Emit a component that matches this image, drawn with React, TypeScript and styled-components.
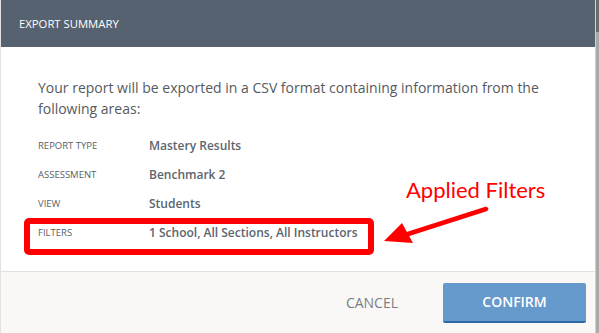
import styled, { createGlobalStyle } from 'styled-components';

const GlobalStyle = createGlobalStyle`
	html, body {
		margin: 0;
		padding: 0;
		background: #ffffff;
	}
	body {
		font-family: 'Open Sans', 'Liberation Sans', sans-serif;
	}
`;

const summaryRows = [
	{ label: 'Report Type', value: 'Mastery Results' },
	{ label: 'Assessment', value: 'Benchmark 2' },
	{ label: 'View', value: 'Students' },
	{ label: 'Filters', value: '1 School, All Sections, All Instructors', highlighted: true },
];

const App = () => {
	return (
		<>
			<GlobalStyle />
			<Page>
				<Modal>
					<Header>Export Summary</Header>
					<Body>
						<Intro>
							Your report will be exported in a CSV format containing information from the following
							areas:
						</Intro>
						<SummaryList>
							{summaryRows.map((row) => (
								<SummaryRow key={row.label}>
									<RowLabel>{row.label}</RowLabel>
									<RowValue>{row.value}</RowValue>
									{row.highlighted && <HighlightBox />}
								</SummaryRow>
							))}
						</SummaryList>
						<Callout>
							<CalloutText>Applied Filters</CalloutText>
							<CalloutArrow width='110' height='40' viewBox='0 0 110 40'>
								<path d='M104 3 L26 28' stroke='#ff0000' strokeWidth='4.5' strokeLinecap='round' />
								<path d='M2 35 L20 17 L31 37 Z' fill='#ff0000' />
							</CalloutArrow>
						</Callout>
					</Body>
					<Footer>
						<CancelButton>Cancel</CancelButton>
						<ConfirmButton>Confirm</ConfirmButton>
					</Footer>
				</Modal>
				<ScrollTrack>
					<ScrollThumb />
				</ScrollTrack>
			</Page>
		</>
	);
};

const Page = styled.div`
	display: flex;
	width: 599px;
	height: 333px;
	overflow: hidden;
`;

const Modal = styled.div`
	flex: 1;
	display: flex;
	flex-direction: column;
	background: #ffffff;
	border-left: 1px solid #e2e2e2;
`;

const Header = styled.div`
	height: 47px;
	flex-shrink: 0;
	display: flex;
	align-items: center;
	padding-left: 18px;
	background: #56626f;
	color: #ffffff;
	font-size: 11.3px;
	text-transform: uppercase;
`;

const Body = styled.div`
	position: relative;
	flex: 1;
	padding: 30px 20px 0 37px;
`;

const Intro = styled.p`
	margin: 0;
	font-size: 14px;
	line-height: 21px;
	color: #555a60;
`;

const SummaryList = styled.div`
	display: flex;
	flex-direction: column;
	margin-top: 12px;
`;

const SummaryRow = styled.div`
	position: relative;
	display: flex;
	align-items: center;
	height: 29px;
`;

const RowLabel = styled.div`
	width: 111px;
	font-size: 9.5px;
	text-transform: uppercase;
	color: #5a5f64;
`;

const RowValue = styled.div`
	font-size: 12px;
	font-weight: 600;
	color: #5b656f;
`;

const HighlightBox = styled.div`
	position: absolute;
	left: -14px;
	top: 0px;
	width: 350px;
	height: 37px;
	box-sizing: border-box;
	border: 6px solid #ff0000;
	border-radius: 5px;
`;

const Callout = styled.div`
	position: absolute;
	left: 381px;
	top: 130px;
	display: flex;
	flex-direction: column;
	align-items: flex-start;
`;

const CalloutText = styled.div`
	margin-left: 24px;
	font-family: 'Lato', 'Liberation Sans', sans-serif;
	font-size: 22px;
	line-height: 26px;
	color: #ff0000;
`;

const CalloutArrow = styled.svg`
	display: block;
	margin-top: 3px;
`;

const Footer = styled.div`
	height: 61px;
	flex-shrink: 0;
	display: flex;
	align-items: center;
	justify-content: flex-end;
	gap: 45px;
	padding-right: 9px;
	background: #f9f8f6;
	border-top: 1px solid #e3e1de;
`;

const CancelButton = styled.button`
	border: none;
	background: none;
	padding: 0;
	font-family: 'Open Sans', sans-serif;
	font-size: 14px;
	text-transform: uppercase;
	color: #7a7f84;
	cursor: pointer;
`;

const ConfirmButton = styled.button`
	width: 143px;
	height: 40px;
	border: none;
	border-bottom: 2px solid #2f68a6;
	border-radius: 2px;
	background: #6699cc;
	font-family: 'Open Sans', sans-serif;
	font-size: 14px;
	font-weight: 600;
	text-transform: uppercase;
	color: #ffffff;
	cursor: pointer;
`;

const ScrollTrack = styled.div`
	width: 3px;
	background: #a9a9a9;
	border-left: 1px solid #d0d0d0;
`;

const ScrollThumb = styled.div`
	height: 32px;
	background: #6b6b6b;
`;

export default App;
